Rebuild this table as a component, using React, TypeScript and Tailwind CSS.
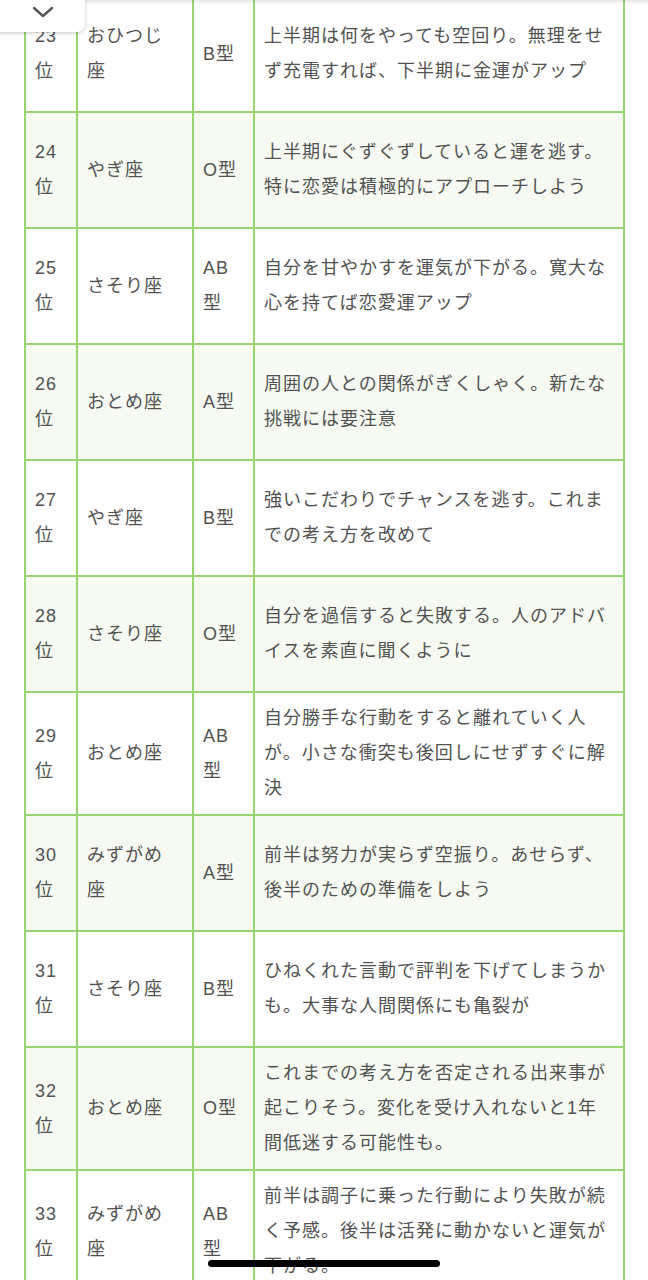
import type { ReactNode } from "react";

interface Row { rank: number; sign: string; blood: string; text: string }

const rows: Row[] = [
  { rank: 23, sign: "おひつじ座", blood: "B型", text: "上半期は何をやっても空回り。無理をせず充電すれば、下半期に金運がアップ" },
  { rank: 24, sign: "やぎ座", blood: "O型", text: "上半期にぐずぐずしていると運を逃す。特に恋愛は積極的にアプローチしよう" },
  { rank: 25, sign: "さそり座", blood: "AB型", text: "自分を甘やかすを運気が下がる。寛大な心を持てば恋愛運アップ" },
  { rank: 26, sign: "おとめ座", blood: "A型", text: "周囲の人との関係がぎくしゃく。新たな挑戦には要注意" },
  { rank: 27, sign: "やぎ座", blood: "B型", text: "強いこだわりでチャンスを逃す。これまでの考え方を改めて" },
  { rank: 28, sign: "さそり座", blood: "O型", text: "自分を過信すると失敗する。人のアドバイスを素直に聞くように" },
  { rank: 29, sign: "おとめ座", blood: "AB型", text: "自分勝手な行動をすると離れていく人が。小さな衝突も後回しにせずすぐに解決" },
  { rank: 30, sign: "みずがめ座", blood: "A型", text: "前半は努力が実らず空振り。あせらず、後半のための準備をしよう" },
  { rank: 31, sign: "さそり座", blood: "B型", text: "ひねくれた言動で評判を下げてしまうかも。大事な人間関係にも亀裂が" },
  { rank: 32, sign: "おとめ座", blood: "O型", text: "これまでの考え方を否定される出来事が起こりそう。変化を受け入れないと1年間低迷する可能性も。" },
  { rank: 33, sign: "みずがめ座", blood: "AB型", text: "前半は調子に乗った行動により失敗が続く予感。後半は活発に動かないと運気が下がる。" },
];

function Cell({ tinted, children }: { tinted: boolean; children: ReactNode }) {
  return (
    <div className={`flex items-center pl-[9px] pr-[12px] py-[8px] ${tinted ? "bg-[#f6faf2]" : "bg-white"}`}>
      <div className="w-full">{children}</div>
    </div>
  );
}

export default function App() {
  return (
    <div className="relative h-[1280px] overflow-hidden bg-white [font-family:'Liberation_Sans','Noto_Sans_CJK_JP',sans-serif] text-[18px] leading-[35px] tracking-[1px] text-[#525252]">
      {/* ranking table */}
      <div className="ml-[24px] mt-[-5px] w-[601px] grid grid-cols-[50px_114px_59px_368px] auto-rows-[minmax(114px,auto)] gap-[2px] p-[2px] bg-[#97d573]">
        {rows.map(r => {
          const tinted = r.rank % 2 === 0;
          return (
            <div key={r.rank} className="contents">
              <Cell tinted={tinted}>{r.rank}位</Cell>
              <Cell tinted={tinted}>{r.sign}</Cell>
              <Cell tinted={tinted}>{r.blood}</Cell>
              <Cell tinted={tinted}>{r.text}</Cell>
            </div>
          );
        })}
      </div>

      {/* header shadow */}
      <div className="absolute left-0 right-0 top-0 h-[4px] bg-gradient-to-b from-black/10 to-transparent" />

      {/* collapse tab */}
      <div className="absolute left-[-8px] top-[-10px] w-[93px] h-[42px] rounded-[8px] bg-white shadow-[0_1px_4px_rgba(0,0,0,0.22)] flex items-end justify-center pb-[14px] pl-[8px]">
        <svg width="22" height="12" viewBox="0 0 22 12" fill="none">
          <path d="M2 2 L11 10 L20 2" stroke="#555" strokeWidth="2.4" strokeLinecap="round" strokeLinejoin="round" />
        </svg>
      </div>

      {/* home indicator */}
      <div className="absolute left-[208px] top-[1260px] w-[232px] h-[7px] rounded-full bg-black" />
    </div>
  );
}
